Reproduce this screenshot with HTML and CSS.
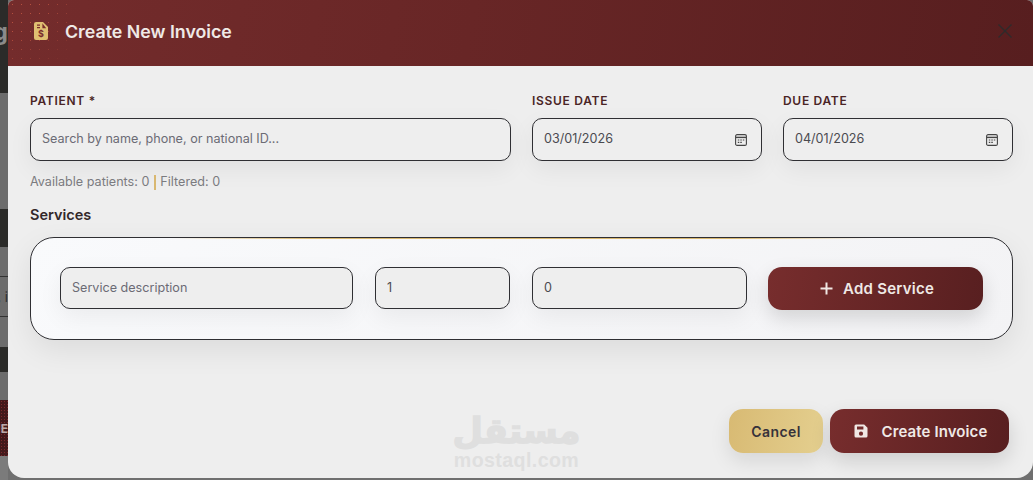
FILE: index.html
```html
<!DOCTYPE html>
<html lang="en">
<head>
    <meta charset="UTF-8">
    <meta name="viewport" content="width=device-width, initial-scale=1.0">
    <title>Create New Invoice</title>
    <link rel="stylesheet" href="styles.css">
</head>
<body>
    <div class="page">
        <div class="backdrop">
            <div class="band band-top"><span class="peek-large">g</span></div>
            <div class="band band-grey-a"></div>
            <div class="band band-dark-a"></div>
            <div class="band band-grey-b"></div>
            <div class="band band-grey-c"><span class="peek-small">, i</span></div>
            <div class="band band-grey-d"></div>
            <div class="band band-dark-b"></div>
            <div class="band band-grey-e"></div>
            <div class="band band-red"><span class="peek-bold">IE</span></div>
            <div class="band band-bottom"></div>
        </div>

        <div class="modal">
            <header class="modal-header">
                <div class="modal-title">
                    <svg class="title-icon" width="14" height="18" viewBox="0 0 14 18">
                        <path d="M2 0h7l5 5v11a2 2 0 0 1-2 2H2a2 2 0 0 1-2-2V2a2 2 0 0 1 2-2z" fill="#e0bf72"/>
                        <path d="M3 3.2h3M3 5.6h3M9 3l2 2.6H9z" stroke="#7a2c2c" stroke-width="1.2" fill="none"/>
                        <text x="7" y="15.4" text-anchor="middle" class="title-icon-text">$</text>
                    </svg>
                    <h1>Create New Invoice</h1>
                </div>
                <button class="close-button" aria-label="Close">
                    <svg width="14" height="14" viewBox="0 0 14 14">
                        <path d="M0.5 0.5l13 13M13.5 0.5l-13 13" stroke="#2e2a2b" stroke-width="1.4" fill="none"/>
                    </svg>
                </button>
            </header>

            <div class="modal-body">
                <div class="invoice-fields">
                    <div class="field">
                        <label class="field-label">Patient *</label>
                        <div class="input-box">
                            <input type="text" placeholder="Search by name, phone, or national ID...">
                        </div>
                    </div>
                    <div class="field">
                        <label class="field-label">Issue Date</label>
                        <div class="input-box">
                            <input type="text" value="03/01/2026">
                            <svg class="calendar-icon" width="12" height="12" viewBox="0 0 12 12">
                                <rect x="0.6" y="0.6" width="10.8" height="10.8" rx="1.5" fill="none" stroke="#444" stroke-width="1.1"/>
                                <path d="M1 3.4h10" stroke="#444" stroke-width="1.4"/>
                                <path d="M2.8 6h1.5M5.3 6h1.5M7.8 6h1.5M2.8 8.4h1.5M5.3 8.4h1.5" stroke="#444" stroke-width="1.2"/>
                            </svg>
                        </div>
                    </div>
                    <div class="field">
                        <label class="field-label">Due Date</label>
                        <div class="input-box">
                            <input type="text" value="04/01/2026">
                            <svg class="calendar-icon" width="12" height="12" viewBox="0 0 12 12">
                                <rect x="0.6" y="0.6" width="10.8" height="10.8" rx="1.5" fill="none" stroke="#444" stroke-width="1.1"/>
                                <path d="M1 3.4h10" stroke="#444" stroke-width="1.4"/>
                                <path d="M2.8 6h1.5M5.3 6h1.5M7.8 6h1.5M2.8 8.4h1.5M5.3 8.4h1.5" stroke="#444" stroke-width="1.2"/>
                            </svg>
                        </div>
                    </div>
                </div>

                <p class="patient-count">Available patients: 0 <span class="divider"></span> Filtered: 0</p>

                <h2 class="section-title">Services</h2>

                <div class="services-card">
                    <div class="input-box service-input"><input type="text" placeholder="Service description"></div>
                    <div class="input-box service-input"><input type="text" value="1"></div>
                    <div class="input-box service-input"><input type="text" value="0"></div>
                    <button class="btn btn-primary btn-add">
                        <svg width="13" height="13" viewBox="0 0 13 13">
                            <path d="M6.5 0.5v12M0.5 6.5h12" stroke="#f0e8e4" stroke-width="2" fill="none"/>
                        </svg>
                        Add Service
                    </button>
                </div>

                <footer class="modal-footer">
                    <button class="btn btn-cancel">Cancel</button>
                    <button class="btn btn-primary btn-create">
                        <svg width="14" height="14" viewBox="0 0 14 14">
                            <path fill-rule="evenodd" d="M2 0.5h8.2L13.5 3.8V12a1.5 1.5 0 0 1-1.5 1.5H2A1.5 1.5 0 0 1 0.5 12V2A1.5 1.5 0 0 1 2 0.5zM3 2.6v2.8h6.4V2.6zM7 7.6a2.1 2.1 0 1 0 0 4.2 2.1 2.1 0 0 0 0-4.2z" fill="#f0e8e4"/>
                        </svg>
                        Create Invoice
                    </button>
                </footer>

                <div class="watermark">
                    <span class="watermark-ar">مستقل</span>
                    <span class="watermark-en">mostaql.com</span>
                </div>
            </div>
        </div>
    </div>
</body>
</html>
```

FILE: styles.css
```css
* {
    box-sizing: border-box;
}
body {
    margin: 0;
    padding: 0;
    background: #6f6f6f;
    font-family: Inter, "Liberation Sans", sans-serif;
    overflow: hidden;
}
.page {
    display: flex;
    height: 480px;
}

/* page behind the dialog, only a strip of it shows */
.backdrop {
    display: flex;
    flex-direction: column;
    flex: 0 0 8px;
    overflow: hidden;
}
.band {
    display: flex;
    align-items: center;
    justify-content: flex-end;
    white-space: nowrap;
    overflow: hidden;
}
.band-top { height: 93px; background: #2b2b29; padding-bottom: 30px; }
.band-grey-a { height: 116px; background: #6c6c6c; }
.band-dark-a { height: 38px; background: #2b2b29; }
.band-grey-b { height: 30px; background: #6c6c6c; border-bottom: 1px solid #333; }
.band-grey-c { height: 40px; background: #6c6c6c; border-bottom: 1px solid #333; }
.band-grey-d { height: 30px; background: #6c6c6c; }
.band-dark-b { height: 25px; background: #2b2b29; }
.band-grey-e { height: 28px; background: #6c6c6c; }
.band-red {
    height: 56px;
    background-color: #43191b;
    background-image: radial-gradient(circle, #7c2a2c 0.7px, transparent 0.8px);
    background-size: 3px 3px;
}
.band-bottom { flex: 1; background: #7b7b7b; }
.peek-large {
    font-size: 24px;
    font-weight: 700;
    color: #8a8a8a;
}
.peek-small { font-size: 13px; color: #2c2c2c; }
.peek-bold { font-size: 12px; font-weight: 700; color: #b9a9a9; }

.modal {
    flex: 1;
    display: flex;
    flex-direction: column;
    height: 478px;
    background: #eeeeee;
    border-radius: 6px 6px 16px 16px;
    overflow: hidden;
}
.modal-header {
    position: relative;
    display: flex;
    align-items: center;
    justify-content: space-between;
    flex: 0 0 66px;
    padding: 0 21px 4px 26px;
    background: linear-gradient(100deg, #742c2c 0%, #682626 45%, #571e1f 100%);
}
.modal-header::before {
    content: "";
    position: absolute;
    left: 0;
    top: 0;
    width: 60px;
    height: 60px;
    background-image: radial-gradient(circle, #b5503f 0.7px, transparent 1px);
    background-size: 9px 9px;
    -webkit-mask-image: radial-gradient(circle at 0 0, #000 40%, transparent 100%);
    mask-image: radial-gradient(circle at 0 0, #000 40%, transparent 100%);
}
.modal-title {
    position: relative;
    display: flex;
    align-items: center;
    gap: 17px;
}
.modal-title h1 {
    margin: 0;
    font-size: 17.8px;
    font-weight: 600;
    color: #efe9e6;
}
.title-icon-text {
    font-family: Inter, "Liberation Sans", sans-serif;
    font-size: 9px;
    font-weight: 700;
    fill: #7a2c2c;
}
.close-button {
    display: flex;
    padding: 0;
    border: none;
    background: none;
    cursor: pointer;
}

.modal-body {
    position: relative;
    flex: 1;
    display: flex;
    flex-direction: column;
    padding: 27px 20px 25px 22px;
}
.invoice-fields {
    display: grid;
    grid-template-columns: 1fr 230px 230px;
    column-gap: 21px;
}
.field-label {
    display: block;
    margin-bottom: 9px;
    font-size: 12px;
    line-height: 16px;
    font-weight: 600;
    letter-spacing: 0.7px;
    text-transform: uppercase;
    color: #4a2425;
}
.input-box {
    display: flex;
    align-items: center;
    height: 43px;
    padding: 0 14px 2px 11px;
    background: #eeeeee;
    border: 1px solid #2f2f33;
    border-radius: 10px;
    box-shadow: 0 8px 24px rgba(0, 0, 0, 0.06);
}
input {
    flex: 1;
    min-width: 0;
    padding: 0;
    border: none;
    outline: none;
    background: none;
    font-family: Inter, "Liberation Sans", sans-serif;
    font-size: 12.6px;
    color: #4a4a50;
}
input::placeholder {
    color: #6b6b75;
    opacity: 1;
}
.calendar-icon {
    flex: none;
    margin-top: 2px;
}
.patient-count {
    display: flex;
    align-items: center;
    gap: 4.5px;
    margin: 13px 0 0;
    font-size: 12.6px;
    line-height: 16px;
    color: #7b7b7f;
}
.divider {
    width: 2px;
    height: 15px;
    background: #d9b871;
}
.section-title {
    margin: 16px 0 13px;
    font-size: 14.5px;
    line-height: 18px;
    font-weight: 600;
    color: #33282a;
}
.services-card {
    position: relative;
    display: flex;
    height: 103px;
    padding: 29px;
    background: linear-gradient(135deg, #f9fafc, #f3f3f5);
    border: 1px solid #2f2f33;
    border-radius: 24px;
    box-shadow: 0 10px 30px rgba(0, 0, 0, 0.08);
}
/* thin gold accent along the top edge */
.services-card::before {
    content: "";
    position: absolute;
    left: 140px;
    right: 140px;
    top: 0;
    height: 1px;
    background: linear-gradient(90deg, transparent, #d9b871 20%, #d9b871 80%, transparent);
}
.service-input {
    height: 42px;
    margin-right: 22px;
}
.service-input:nth-child(1) { width: 293px; }
.service-input:nth-child(2) { width: 135px; }
.service-input:nth-child(3) { width: 215px; margin-right: 0; }

.btn {
    display: flex;
    align-items: center;
    justify-content: center;
    padding: 0;
    border: none;
    border-radius: 14px;
    font-family: Inter, "Liberation Sans", sans-serif;
    font-size: 15px;
    font-weight: 600;
    letter-spacing: 0.25px;
    cursor: pointer;
}
.btn-primary {
    background: linear-gradient(100deg, #772d2d, #581f20);
    color: #efe9e6;
    box-shadow: 0 8px 20px rgba(0, 0, 0, 0.14);
}
.btn-add {
    gap: 10px;
    width: 215px;
    height: 43px;
    margin-left: auto;
    padding-left: 3px;
}
.modal-footer {
    display: flex;
    justify-content: flex-end;
    gap: 7px;
    margin-top: auto;
    padding-right: 4px;
}
.btn-cancel {
    width: 94px;
    height: 44px;
    background: linear-gradient(100deg, #d8ba73, #e4cf8f);
    color: #36323a;
    font-size: 14px;
    letter-spacing: 0.4px;
    box-shadow: 0 8px 20px rgba(0, 0, 0, 0.1);
}
.btn-create {
    gap: 14px;
    width: 179px;
    height: 44px;
    padding-left: 2px;
    letter-spacing: 0.1px;
}

.watermark {
    position: absolute;
    left: 442px;
    bottom: 8px;
    width: 133px;
    display: flex;
    flex-direction: column;
    align-items: center;
    color: #dfdfdf;
    pointer-events: none;
}
.watermark-ar {
    font-family: "DejaVu Sans", sans-serif;
    font-size: 35px;
    line-height: 38px;
    font-weight: 700;
    -webkit-text-stroke: 1.5px #dfdfdf;
}
.watermark-en {
    font-family: "Liberation Sans", sans-serif;
    font-size: 19.6px;
    line-height: 20px;
    font-weight: 700;
    letter-spacing: 0.4px;
}
```
